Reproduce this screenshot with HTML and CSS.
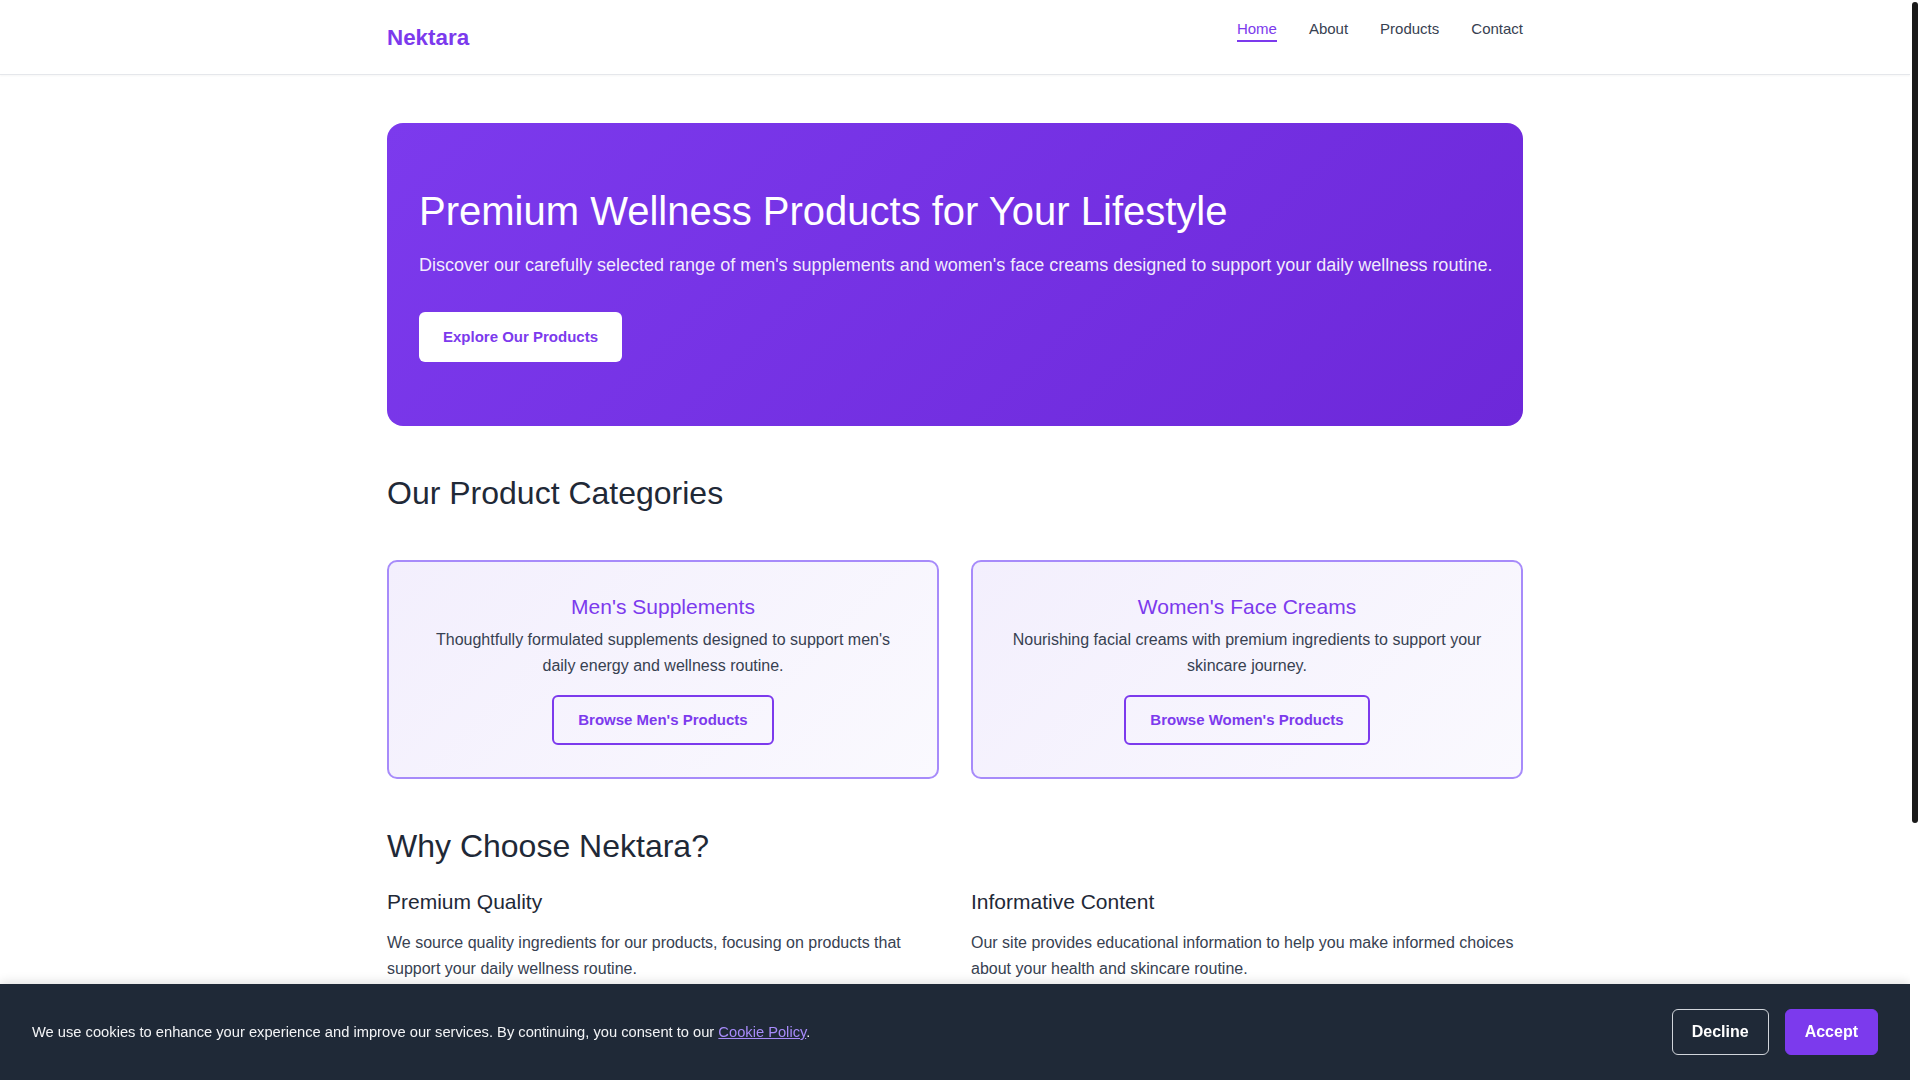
FILE: index.html
```html
<!DOCTYPE html>
<html lang="en">
<head>
<meta charset="utf-8">
<title>Nektara - Premium Wellness Products</title>
<link rel="stylesheet" href="styles.css">
</head>
<body>
<header class="site-header">
  <div class="container header-inner">
    <a class="logo" href="#">Nektara</a>
    <nav class="nav">
      <a class="nav-link active" href="#">Home</a>
      <a class="nav-link" href="#">About</a>
      <a class="nav-link" href="#">Products</a>
      <a class="nav-link" href="#">Contact</a>
    </nav>
  </div>
</header>

<main class="container main">
  <section class="hero">
    <h1 class="hero-title">Premium Wellness Products for Your Lifestyle</h1>
    <p class="hero-text">Discover our carefully selected range of men's supplements and women's face creams designed to support your daily wellness routine.</p>
    <a class="btn-hero" href="#">Explore Our Products</a>
  </section>

  <section class="categories">
    <h2 class="section-title">Our Product Categories</h2>
    <div class="cat-grid">
      <div class="cat-card">
        <h3 class="cat-title">Men's Supplements</h3>
        <p class="cat-text">Thoughtfully formulated supplements designed to support men's daily energy and wellness routine.</p>
        <a class="btn-outline" href="#">Browse Men's Products</a>
      </div>
      <div class="cat-card">
        <h3 class="cat-title">Women's Face Creams</h3>
        <p class="cat-text">Nourishing facial creams with premium ingredients to support your skincare journey.</p>
        <a class="btn-outline" href="#">Browse Women's Products</a>
      </div>
    </div>
  </section>

  <section class="why">
    <h2 class="section-title why-title">Why Choose Nektara?</h2>
    <div class="feature-grid">
      <div class="feature">
        <h3 class="feature-title">Premium Quality</h3>
        <p class="feature-text">We source quality ingredients for our products, focusing on products that support your daily wellness routine.</p>
      </div>
      <div class="feature">
        <h3 class="feature-title">Informative Content</h3>
        <p class="feature-text">Our site provides educational information to help you make informed choices about your health and skincare routine.</p>
      </div>
      <div class="feature">
        <h3 class="feature-title">Customer Focus</h3>
        <p class="feature-text">We are committed to providing a helpful shopping experience and responsive customer support.</p>
      </div>
      <div class="feature">
        <h3 class="feature-title">Transparent Information</h3>
        <p class="feature-text">We share clear product details so you know exactly what you are choosing for your routine.</p>
      </div>
    </div>
  </section>
</main>

<footer class="site-footer">
  <div class="container footer-inner">
    <p class="footer-brand">Nektara</p>
    <p class="footer-text">&copy; 2024 Nektara. All rights reserved.</p>
  </div>
</footer>

<div class="cookie-banner">
  <p class="cookie-text">We use cookies to enhance your experience and improve our services. By continuing, you consent to our <a class="cookie-link" href="#">Cookie Policy</a>.</p>
  <div class="cookie-actions">
    <button class="btn-decline" type="button">Decline</button>
    <button class="btn-accept" type="button">Accept</button>
  </div>
</div>

<div class="scroll-track" aria-hidden="true"><div class="scroll-thumb"></div></div>
</body>
</html>
```
FILE: styles.css
```css
* { box-sizing: border-box; }

html, body { margin: 0; padding: 0; }

body {
  margin-right: 10px;
  font-family: "Liberation Sans", Arial, sans-serif;
  color: #374151;
  background: #ffffff;
  line-height: 1.6;
}

a { text-decoration: none; }

.container {
  max-width: 1200px;
  margin: 0 auto;
  padding: 0 32px;
}

/* Header */
.site-header {
  border-bottom: 1px solid #e5e7eb;
  box-shadow: 0 1px 2px rgba(0, 0, 0, 0.04);
  background: #ffffff;
}

.header-inner {
  height: 74px;
  display: flex;
  justify-content: space-between;
  align-items: center;
}

.logo {
  font-size: 22.4px;
  font-weight: 700;
  color: #7c3aed;
  line-height: normal;
  margin-top: 1px;
}

.nav {
  align-self: flex-start;
  margin-top: 20px;
  display: flex;
  gap: 32px;
}

.nav-link {
  font-size: 15px;
  line-height: normal;
  color: #374151;
  padding-bottom: 3px;
  border-bottom: 2px solid transparent;
}

.nav-link.active {
  color: #7c3aed;
  border-bottom-color: #7c3aed;
}

/* Main */
.main {
  padding-top: 48px;
  padding-bottom: 48px;
}

.hero {
  background: linear-gradient(135deg, #7c3aed 0%, #6d28d9 100%);
  border-radius: 16px;
  padding: 64px 32px;
  color: #ffffff;
}

.hero-title {
  margin: 0 0 16px;
  font-size: 40px;
  font-weight: 400;
  line-height: 1.2;
}

.hero-text {
  margin: 0 -12px 32px 0;
  font-size: 18px;
  line-height: 1.6;
  color: rgba(255, 255, 255, 0.92);
}

.btn-hero {
  display: inline-block;
  background: #ffffff;
  color: #7c3aed;
  font-weight: 700;
  font-size: 15px;
  line-height: 18px;
  padding: 16px 24px;
  border-radius: 6px;
}

.section-title {
  margin: 48px 0 48px;
  font-size: 32px;
  font-weight: 400;
  line-height: 1.2;
  color: #1f2937;
}

.why-title { margin-bottom: 24px; }

.cat-grid {
  display: grid;
  grid-template-columns: 1fr 1fr;
  gap: 32px;
}

.cat-card {
  border: 2px solid #a78bfa;
  border-radius: 10px;
  background: linear-gradient(135deg, #f3effd 0%, #faf9fe 100%);
  padding: 32px;
  text-align: center;
}

.cat-title {
  margin: 0 0 8px;
  font-size: 21px;
  font-weight: 400;
  line-height: 1.2;
  color: #7c3aed;
}

.cat-text {
  margin: 0 0 16px;
  font-size: 16px;
  line-height: 1.6;
  color: #374151;
}

.btn-outline {
  display: inline-block;
  border: 2px solid #7c3aed;
  border-radius: 6px;
  color: #7c3aed;
  font-weight: 700;
  font-size: 15px;
  line-height: 18px;
  padding: 14px 24px;
  background: transparent;
}

.feature-grid {
  display: grid;
  grid-template-columns: 1fr 1fr;
  gap: 32px;
}

.feature-title {
  margin: 0 0 16px;
  font-size: 21px;
  font-weight: 400;
  line-height: 1.2;
  color: #1f2937;
}

.feature-text {
  margin: 0;
  font-size: 16px;
  line-height: 1.6;
  color: #374151;
}

/* Footer */
.site-footer {
  background: #1f2937;
  color: #d1d5db;
  min-height: 216px;
}

.footer-inner {
  padding-top: 48px;
  padding-bottom: 48px;
}

.footer-brand {
  margin: 0 0 12px;
  font-size: 20px;
  font-weight: 700;
  color: #ffffff;
}

.footer-text {
  margin: 0;
  font-size: 14px;
}

/* Cookie banner */
.cookie-banner {
  position: fixed;
  left: 0;
  right: 10px;
  bottom: 0;
  background: #1f2937;
  box-shadow: 0 -2px 10px rgba(0, 0, 0, 0.12);
  padding: 25px 32px;
  display: flex;
  justify-content: space-between;
  align-items: center;
  gap: 24px;
}

.cookie-text {
  margin: 0;
  font-size: 14.7px;
  line-height: 1.5;
  color: #f3f4f6;
}

.cookie-link {
  color: #a78bfa;
  text-decoration: underline;
}

.cookie-actions {
  display: flex;
  gap: 16px;
}

.btn-decline,
.btn-accept {
  font-family: "Liberation Sans", Arial, sans-serif;
  font-size: 16px;
  font-weight: 700;
  line-height: 20px;
  padding: 12px 19px;
  border-radius: 6px;
  cursor: pointer;
}

.btn-decline {
  background: transparent;
  color: #ffffff;
  border: 1px solid #d1d5db;
}

.btn-accept {
  background: #7c3aed;
  color: #ffffff;
  border: 1px solid #7c3aed;
}

/* Scrollbar lookalike */
.scroll-track {
  position: fixed;
  top: 0;
  right: 0;
  bottom: 0;
  width: 10px;
  background: #ffffff;
}

.scroll-thumb {
  margin: 2px 2px 0;
  height: 821px;
  border-radius: 3px;
  background: #1a1a1a;
}
```
